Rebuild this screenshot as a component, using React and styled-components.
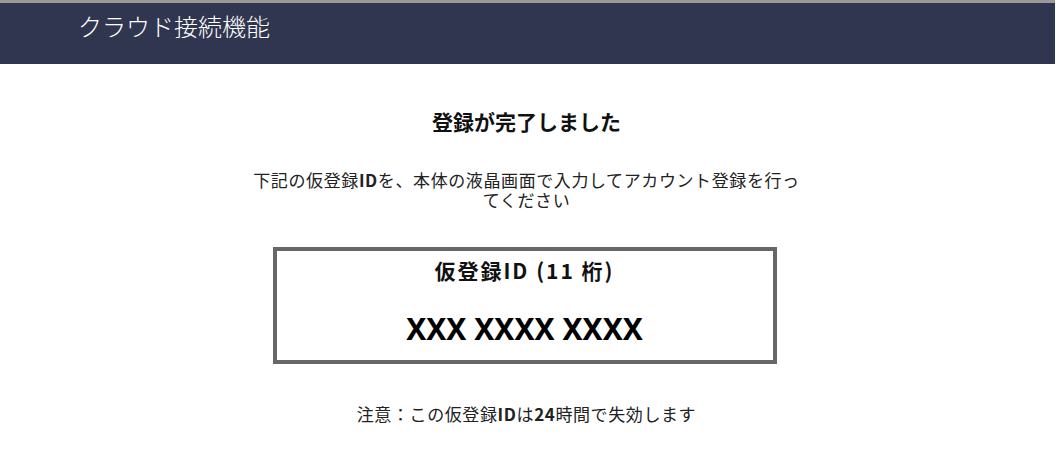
import React from "react";
import styled, { createGlobalStyle } from "styled-components";

const GlobalStyle = createGlobalStyle`
  body {
    margin: 0;
    background: #fff;
    font-family: "Noto Sans CJK JP", "Noto Sans", sans-serif;
    color: #222;
  }
`;

const Header = styled.header`
  border-top: 3px solid #9a9a9a;
  background: #313650;
  height: 64px;
  margin-right: 1px;
  padding: 7px 0 0 78px;
  box-sizing: border-box;
`;

const HeaderTitle = styled.h1`
  margin: 0;
  color: #fff;
  font-size: 24px;
  font-weight: 300;
  line-height: 32px;
`;

const Main = styled.main`
  display: flex;
  flex-direction: column;
  align-items: center;
  padding: 43px 3px 0 0;
`;

const Title = styled.h2`
  margin: 0;
  font-size: 21px;
  font-weight: 700;
  line-height: 28px;
  color: #111;
`;

const Lead = styled.p`
  margin: 35px 0 0;
  max-width: 560px;
  text-align: center;
  font-size: 17px;
  line-height: 20px;
  letter-spacing: 0.6px;
`;

const IdBox = styled.section`
  margin: 37px 4px 0 0;
  width: 504px;
  height: 117px;
  box-sizing: border-box;
  border: 4px solid #676767;
  display: flex;
  flex-direction: column;
  align-items: center;
  padding-top: 5px;
`;

const IdLabel = styled.div`
  font-size: 21px;
  font-weight: 700;
  line-height: 28px;
  letter-spacing: 2px;
  color: #111;
`;

const IdValue = styled.div`
  margin-top: 27px;
  font-family: "Noto Sans", sans-serif;
  font-size: 30px;
  font-weight: 700;
  line-height: 36px;
  color: #000;
`;

const Note = styled.p`
  margin: 38px 0 0;
  font-size: 17px;
  line-height: 24px;
  letter-spacing: 0.6px;
`;

export default function App() {
  return (
    <>
      <GlobalStyle />
      <Header>
        <HeaderTitle>クラウド接続機能</HeaderTitle>
      </Header>
      <Main>
        <Title>登録が完了しました</Title>
        <Lead>
          下記の仮登録<b>ID</b>を、本体の液晶画面で入力してアカウント登録を行ってください
        </Lead>
        <IdBox>
          <IdLabel>仮登録ID (11 桁)</IdLabel>
          <IdValue>XXX XXXX XXXX</IdValue>
        </IdBox>
        <Note>
          注意：この仮登録<b>ID</b>は<b>24</b>時間で失効します
        </Note>
      </Main>
    </>
  );
}
